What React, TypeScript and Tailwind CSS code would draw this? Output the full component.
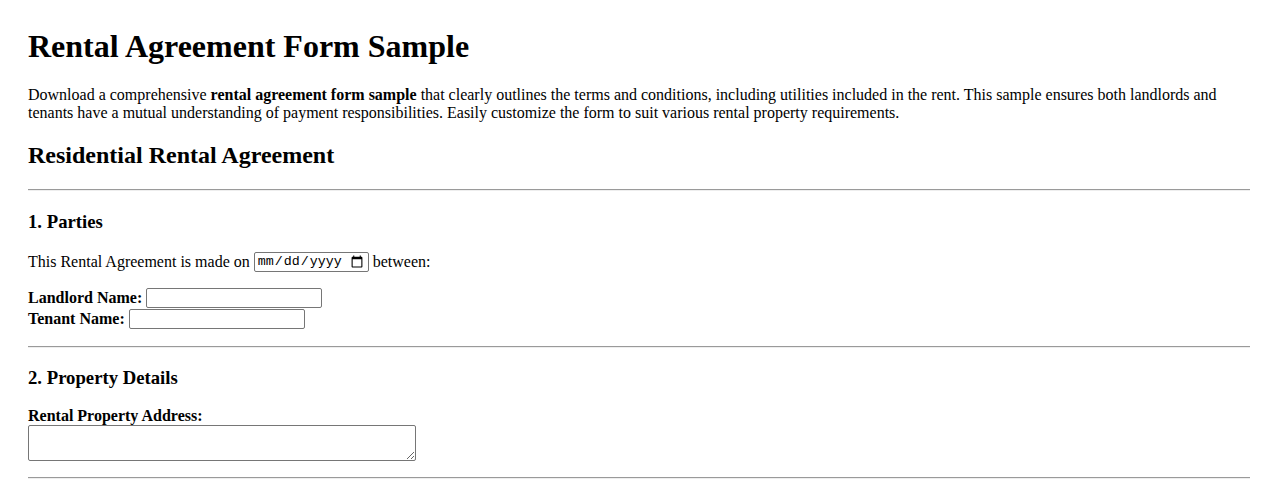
// App.tsx
export default function App() {
  return (
    <div className="min-h-[501px] bg-white px-[28px] pt-[28px] font-['Liberation_Serif','Times_New_Roman',serif] leading-[normal] text-black">
      <h1 className="mb-[20.5px] text-[32px] font-bold">Rental Agreement Form Sample</h1>

      <p className="mb-[20px] text-[16px]">
        Download a comprehensive <strong>rental agreement form sample</strong> that clearly outlines the terms and
        conditions, including utilities included in the rent. This sample ensures both landlords and tenants have a
        mutual understanding of payment responsibilities. Easily customize the form to suit various rental property
        requirements.
      </p>

      <h2 className="mb-[20px] text-[24px] font-bold">Residential Rental Agreement</h2>

      <hr className="border-t border-b border-t-[#9a9a9a] border-b-[#eeeeee]" />

      <section>
        <h3 className="mt-[20px] mb-[19.5px] text-[18.72px] font-bold">1. Parties</h3>

        <div className="flex h-[20px] items-center gap-[4px] text-[16px]">
          <span>This Rental Agreement is made on</span>
          <input
            type="date"
            className="h-[20px] w-[115px] rounded-[2px] border border-[#767676] px-[2px] font-['Liberation_Mono','DejaVu_Sans_Mono',monospace] text-[13.33px] leading-none"
          />
          <span>between:</span>
        </div>

        <div className="mt-[15px] text-[16px]">
          <div className="flex h-[21px] items-center gap-[4px]">
            <strong>Landlord Name:</strong>
            <input type="text" className="h-[20px] w-[176px] rounded-[2px] border border-[#767676] px-[2px] text-[13.33px]" />
          </div>
          <div className="flex h-[21px] items-center gap-[4px]">
            <strong>Tenant Name:</strong>
            <input type="text" className="h-[20px] w-[176px] rounded-[2px] border border-[#767676] px-[2px] text-[13.33px]" />
          </div>
        </div>
      </section>

      <hr className="mt-[17px] border-t border-b border-t-[#9a9a9a] border-b-[#eeeeee]" />

      <section>
        <h3 className="mt-[19px] mb-[17.5px] text-[18.72px] font-bold">2. Property Details</h3>
        <label className="block text-[16px] font-bold">Rental Property Address:</label>
        <textarea className="block h-[36px] w-[388px] rounded-[2px] border border-[#767676] px-[2px] font-['Liberation_Mono',monospace] text-[13.33px]" />
      </section>

      <hr className="mt-[16px] border-t border-b border-t-[#9a9a9a] border-b-[#eeeeee]" />
    </div>
  );
}
